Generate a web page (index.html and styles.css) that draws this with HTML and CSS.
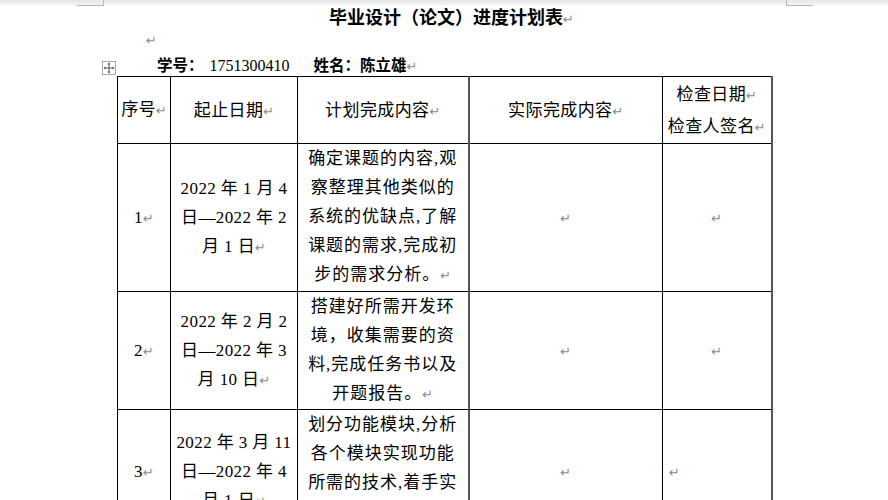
FILE: index.html
```html
<!DOCTYPE html>
<html lang="zh">
<head>
<meta charset="utf-8">
<title>毕业设计（论文）进度计划表</title>
<link rel="stylesheet" href="styles.css">
</head>
<body>
<div class="topbar">
  <span class="corner corner-left"></span>
  <span class="corner corner-right"></span>
</div>
<h1 class="title">毕业设计（论文）进度计划表<span class="pm">↵</span></h1>
<p class="blank"><span class="pm">↵</span></p>
<div class="info">
  <span class="handle">
    <svg width="12" height="12" viewBox="0 0 12 12">
      <path d="M6 1V11M1 6H11" stroke="#555" stroke-width="1" fill="none"/>
      <path d="M6 0.5L4.5 2.5H7.5Z M6 11.5L4.5 9.5H7.5Z M0.5 6L2.5 4.5V7.5Z M11.5 6L9.5 4.5V7.5Z" fill="#555"/>
    </svg>
  </span>
  <span class="info-text"><b>学号：</b><span class="num">1751300410</span><b class="name">姓名：陈立雄</b><span class="pm">↵</span></span>
</div>
<table class="plan">
  <colgroup>
    <col class="c1"><col class="c2"><col class="c3"><col class="c4"><col class="c5">
  </colgroup>
  <thead>
    <tr class="head">
      <th>序号<span class="pm">↵</span></th>
      <th>起止日期<span class="pm">↵</span></th>
      <th>计划完成内容<span class="pm">↵</span></th>
      <th>实际完成内容<span class="pm">↵</span></th>
      <th class="check">检查日期<span class="pm">↵</span><br>检查人签名<span class="pm">↵</span></th>
    </tr>
  </thead>
  <tbody>
    <tr class="r1">
      <td><span class="num">1</span><span class="pm">↵</span></td>
      <td>2022 年 1 月 4<br>日—2022 年 2<br>月 1 日<span class="pm">↵</span></td>
      <td class="content">确定课题的内容,观<br>察整理其他类似的<br>系统的优缺点,了解<br>课题的需求,完成初<br>步的需求分析。<span class="pm">↵</span></td>
      <td><span class="pm">↵</span></td>
      <td><span class="pm">↵</span></td>
    </tr>
    <tr class="r2">
      <td><span class="num">2</span><span class="pm">↵</span></td>
      <td>2022 年 2 月 2<br>日—2022 年 3<br>月 10 日<span class="pm">↵</span></td>
      <td class="content">搭建好所需开发环<br>境，收集需要的资<br>料,完成任务书以及<br>开题报告。<span class="pm">↵</span></td>
      <td><span class="pm">↵</span></td>
      <td><span class="pm">↵</span></td>
    </tr>
    <tr class="r3">
      <td><span class="num">3</span><span class="pm">↵</span></td>
      <td>2022 年 3 月 11<br>日—2022 年 4<br>月 1 日<span class="pm">↵</span></td>
      <td class="content">划分功能模块,分析<br>各个模块实现功能<br>所需的技术,着手实<br>现系统。<span class="pm">↵</span></td>
      <td><span class="pm">↵</span></td>
      <td class="left"><span class="pm">↵</span></td>
    </tr>
  </tbody>
</table>
</body>
</html>
```
FILE: styles.css
```css
html, body {
  margin: 0;
  padding: 0;
  background: #fff;
}
body {
  width: 888px;
  height: 500px;
  overflow: hidden;
  font-family: "Liberation Serif", "Noto Sans CJK SC", serif;
  color: #000;
}
.topbar {
  display: flex;
  height: 5px;
  background: linear-gradient(#e6e6e6, #f4f4f4);
}
.corner {
  display: block;
  width: 26px;
  height: 5px;
  border-bottom: 1px solid #b8b8b8;
}
.corner-left {
  margin-left: 77px;
  border-right: 1px solid #b8b8b8;
}
.corner-right {
  margin-left: 682px;
  border-left: 1px solid #b8b8b8;
}
.pm {
  font-family: "DejaVu Sans", sans-serif;
  font-size: 13px;
  font-weight: normal;
  letter-spacing: 0;
  color: #8a8a8a;
}
.title {
  margin: 0;
  padding-left: 329px;
  height: 23px;
  line-height: 23px;
  font-family: "Noto Sans CJK SC", sans-serif;
  font-size: 18px;
  font-weight: bold;
}
.blank {
  margin: 0;
  padding-left: 146px;
  height: 24px;
  line-height: 24px;
}
.info {
  display: flex;
  align-items: flex-end;
  height: 24px;
  padding-left: 102px;
}
.handle {
  display: flex;
  align-items: center;
  justify-content: center;
  width: 12px;
  height: 12px;
  border: 1px solid #a8a8a8;
  margin-bottom: 1px;
  margin-right: 41px;
}
.info-text {
  align-self: center;
  padding-top: 3px;
  font-size: 16px;
  line-height: 24px;
  white-space: pre;
}
.info-text b {
  font-family: "Noto Sans CJK SC", sans-serif;
  font-weight: bold;
  font-size: 15.5px;
}
.info-text .num {
  margin-left: 6px;
  font-family: "Liberation Serif", serif;
  font-size: 16px;
}
.info-text .name {
  margin-left: 24px;
}
.plan {
  margin-left: 117px;
  border-collapse: collapse;
  table-layout: fixed;
  width: 654px;
  font-size: 17px;
  letter-spacing: 0.4px;
}
.plan col.c1 { width: 53px; }
.plan col.c2 { width: 127px; }
.plan col.c3 { width: 171px; }
.plan col.c4 { width: 194px; }
.plan col.c5 { width: 109px; }
.plan th, .plan td {
  border: 1px solid #000;
  padding: 0 2px;
  text-align: center;
  vertical-align: middle;
  font-weight: normal;
  line-height: 29px;
  white-space: nowrap;
}
.plan th {
  line-height: 31px;
  padding-top: 1px;
}
.plan tr > :first-child { padding: 0; }
.plan tr.head { height: 67px; }
.plan tr.r1 { height: 148px; }
.plan tr.r2 { height: 117px; }
.plan tr.r3 { height: 124px; }
.plan td.content {
  vertical-align: top;
  padding-top: 0;
  padding-left: 1px;
  padding-right: 1px;
  letter-spacing: 1px;
}
.plan td.left { text-align: left; padding-left: 6px; }
.plan tr > :nth-child(3) { border-right: 2px solid #555; }
.plan tr > :last-child { border-right: 2px solid #555; }
.plan .num { font-family: "Liberation Serif", serif; }
```
